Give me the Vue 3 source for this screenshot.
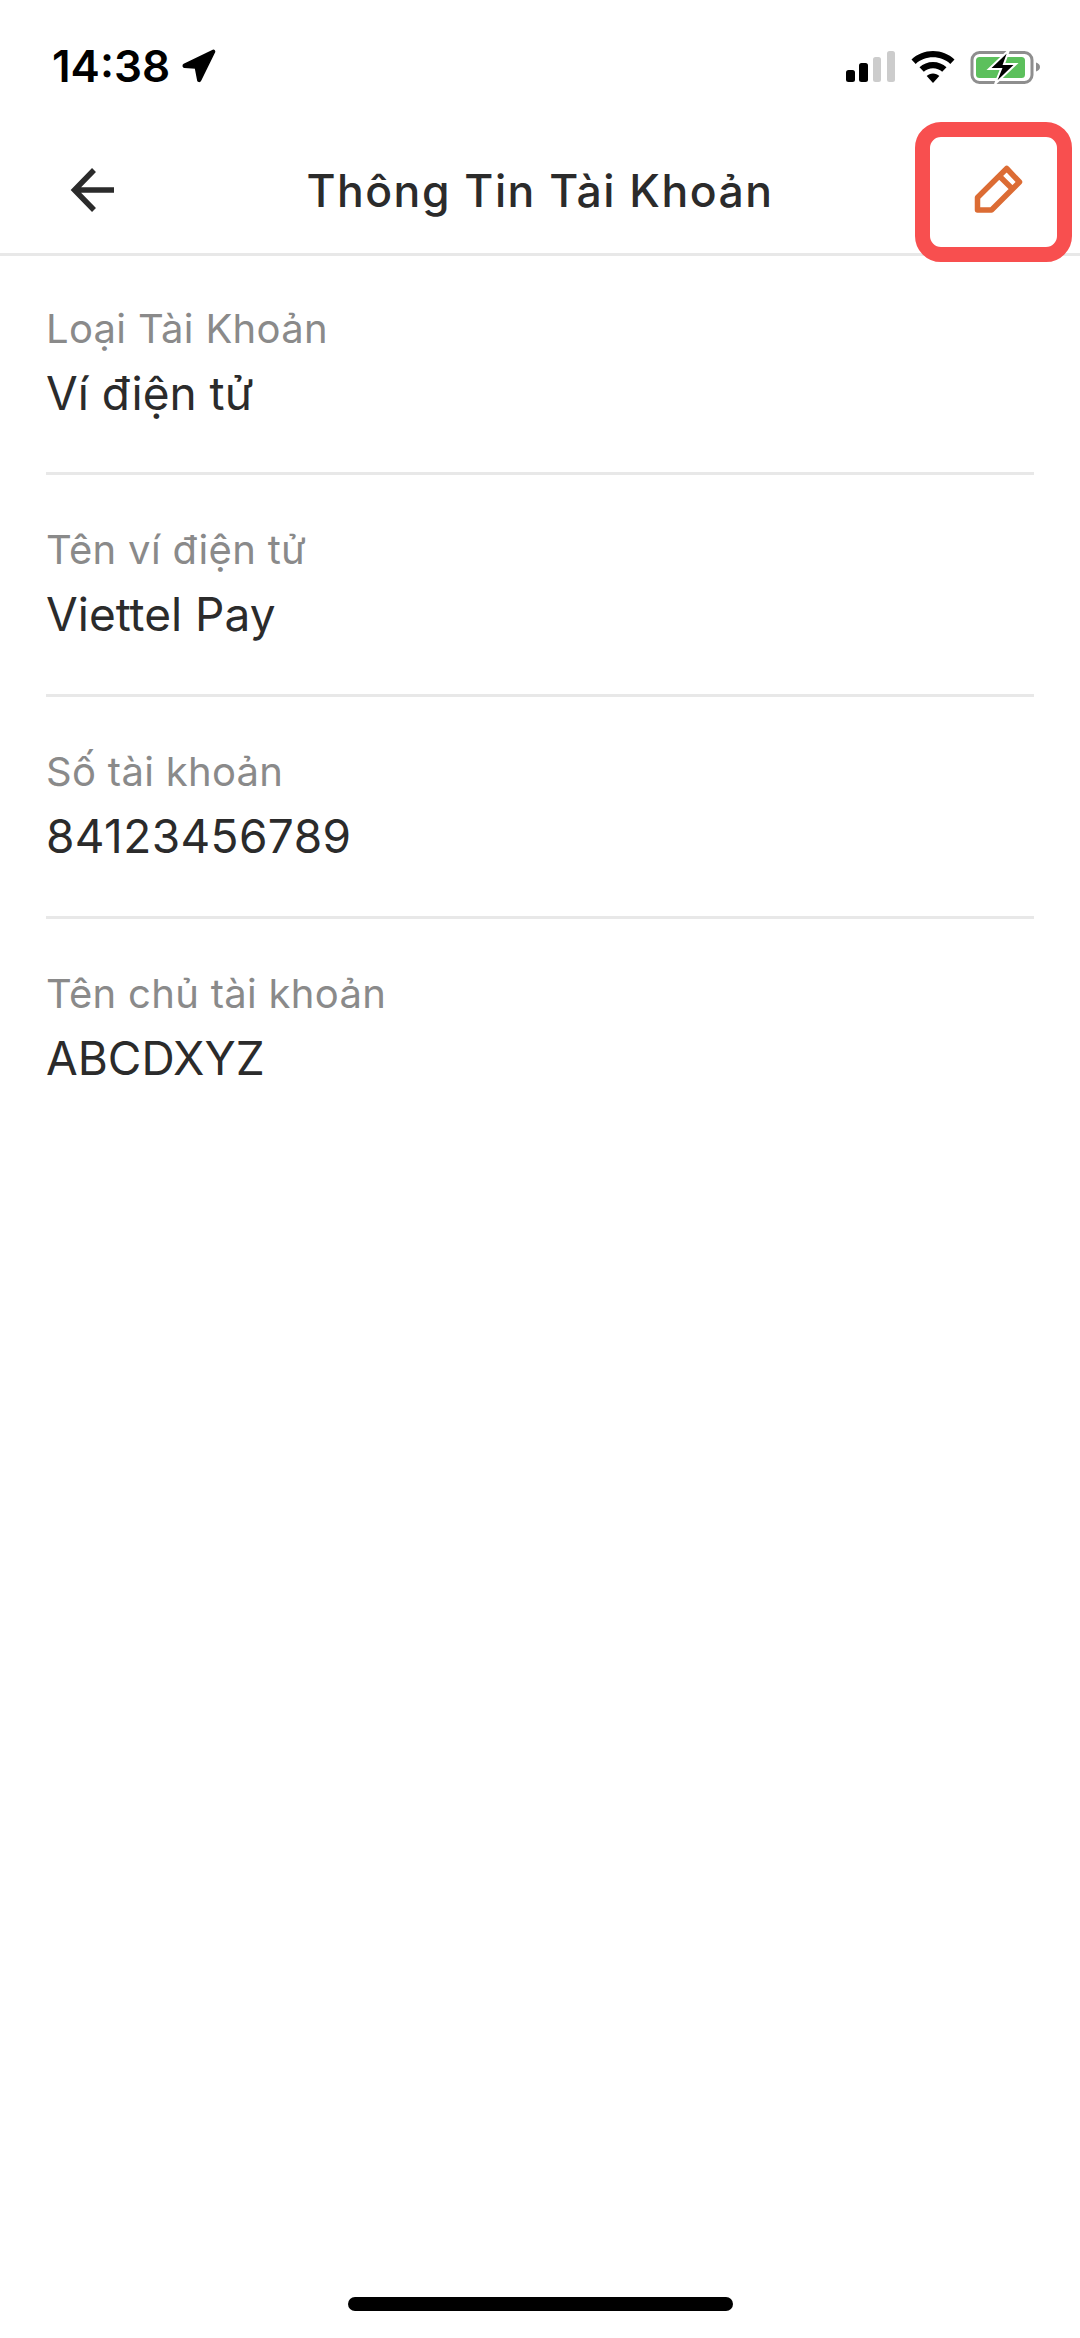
<template>
  <div class="screen">
    <div class="status-bar">
      <div class="time">
        <span>14:38</span>
        <svg class="location" width="36" height="36" viewBox="0 0 36 36">
          <path d="M3 16.500 32 2.500c1-.4 1.900.4 1.500 1.500L19.500 32.500c-.6 1.300-2.300 1.100-2.700-.3L14.500 20 3.500 19.300c-1.500-.1-1.700-2.100-.5-2.800Z" fill="#000" stroke="#000" stroke-width="1.500" stroke-linejoin="round" />
        </svg>
      </div>
      <div class="status-icons">
        <svg class="signal" width="50" height="32" viewBox="0 0 50 32">
          <rect x="0" y="19" width="9" height="12" rx="2.500" fill="#000" />
          <rect x="13" y="12" width="9" height="19" rx="2.500" fill="#000" />
          <rect x="27" y="6" width="8" height="25" rx="2.500" fill="#ccc" />
          <rect x="41" y="0" width="8" height="31" rx="2.500" fill="#ccc" />
        </svg>
        <svg class="wifi" width="44" height="32" viewBox="0 0 44 32">
          <path d="M22 0c8.200 0 15.700 3.100 21.500 8.400l-4.200 4.500C34.700 8.700 28.700 6.300 22 6.300S9.300 8.700 4.700 12.900L.5 8.400C6.300 3.100 13.800 0 22 0Z" fill="#000" />
          <path d="M22 11c5.200 0 9.900 2 13.500 5.300l-4.300 4.500c-2.500-2.200-5.700-3.600-9.200-3.600s-6.700 1.400-9.200 3.600l-4.300-4.500C12.100 13 16.800 11 22 11Z" fill="#000" />
          <path d="M22 22.500c2.500 0 4.700.9 6.300 2.400L22 32l-6.300-7.100c1.600-1.500 3.800-2.400 6.300-2.400Z" fill="#000" />
        </svg>
        <svg class="battery" width="72" height="36" viewBox="0 0 72 36">
          <rect x="2" y="3.500" width="60" height="30" rx="7.500" fill="none" stroke="#8e8e8e" stroke-width="3" />
          <rect x="6" y="8" width="49" height="21" rx="3.500" fill="#5cc05c" />
          <path d="M66 13.500c2.500.6 4 2.300 4 4.500s-1.500 3.900-4 4.500Z" fill="#8e8e8e" />
          <path d="M39 1 19 20h12l-6 15 21-20H34Z" fill="#000" stroke="#fff" stroke-width="2" />
        </svg>
      </div>
    </div>

    <header class="nav">
      <button class="nav-btn back" type="button" aria-label="Quay lại">
        <svg width="46" height="46" viewBox="0 0 46 46">
          <path d="M44 23H5M24 3 4.500 23 24 43" fill="none" stroke="#2b2b2b" stroke-width="5.500" />
        </svg>
      </button>
      <h1 class="title">Thông Tin Tài Khoản</h1>
      <button class="nav-btn edit" type="button" aria-label="Chỉnh sửa">
        <svg width="52" height="52" viewBox="0 0 52 52">
          <path d="M33.700 6.500 46.500 20 18.500 48h-14V35.500ZM25.300 13 40 27.500" fill="none" stroke="#dc6c34" stroke-width="5.500" stroke-linejoin="round" />
        </svg>
      </button>
      <div class="highlight"></div>
    </header>

    <section class="list">
      <div v-for="item in rows" :key="item.label" class="row">
        <div class="label">{{ item.label }}</div>
        <div class="value" :class="{ digits: /^\d+$/.test(item.value) }">{{ item.value }}</div>
      </div>
    </section>

    <div class="home-bar"></div>
  </div>
</template>

<script setup>
const rows = [
  { label: "Loại Tài Khoản", value: "Ví điện tử" },
  { label: "Tên ví điện tử", value: "Viettel Pay" },
  { label: "Số tài khoản", value: "84123456789" },
  { label: "Tên chủ tài khoản", value: "ABCDXYZ" },
];
</script>

<style scoped>
.screen {
  position: relative;
  width: 1080px;
  height: 2338px;
  overflow: hidden;
  display: flex;
  flex-direction: column;
  background: #fff;
  color: #2b2b2b;
  font-family: Inter, "Noto Sans", sans-serif;
}

.status-bar {
  height: 122px;
  flex: none;
  padding: 44px 38px 0 52px;
  box-sizing: border-box;
  display: flex;
  justify-content: space-between;
  align-items: flex-start;
}
.time {
  display: flex;
  align-items: center;
  gap: 11px;
  font-size: 44px;
  line-height: 44px;
  font-weight: 600;
  color: #000;
}
.status-icons {
  display: flex;
  align-items: center;
  gap: 15px;
  margin-top: 5px;
}

.nav {
  position: relative;
  flex: none;
  height: 134px;
  box-sizing: border-box;
  border-bottom: 3px solid #e8e8e8;
  display: flex;
  align-items: center;
  justify-content: center;
}
.nav-btn {
  position: absolute;
  padding: 0;
  border: 0;
  background: none;
  display: flex;
}
.back {
  left: 70px;
  top: 45px;
}
.edit {
  left: 973px;
  top: 40px;
}
.title {
  margin: 7px 0 0;
  font-size: 44.500px;
  line-height: 54px;
  font-weight: 500;
  letter-spacing: 1.500px;
  color: #2b2b2b;
}
.highlight {
  position: absolute;
  left: 915px;
  top: 0;
  width: 157px;
  height: 140px;
  box-sizing: border-box;
  border: 15px solid #f84f4f;
  border-radius: 26px;
}

.list {
  padding: 0 46px;
}
.row {
  height: 222px;
  box-sizing: border-box;
  padding-top: 42px;
  border-bottom: 3px solid #e8e8e8;
}
.row:first-child {
  height: 219px;
  padding-top: 40px;
}
.row:last-child {
  border-bottom: 0;
}
.label {
  font-size: 40px;
  letter-spacing: 0.300px;
  line-height: 65px;
  color: #8a8a8a;
}
.value {
  font-size: 46px;
  line-height: 64px;
  color: #2b2b2b;
}
.value.digits {
  letter-spacing: 0.400px;
}

.home-bar {
  position: absolute;
  left: 348px;
  top: 2297px;
  width: 385px;
  height: 14px;
  border-radius: 7px;
  background: #000;
}
</style>
